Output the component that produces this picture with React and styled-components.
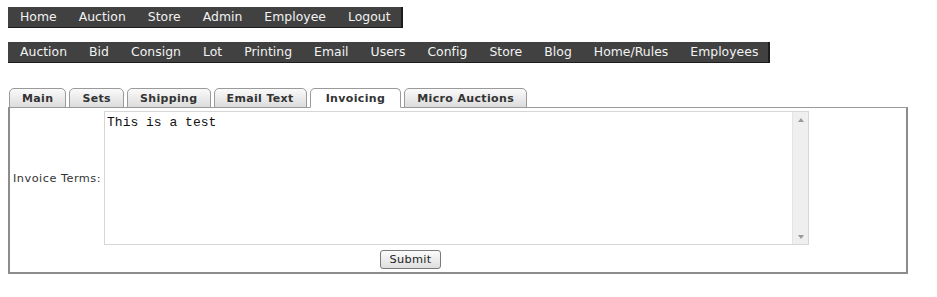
import React from 'react';
import styled, { createGlobalStyle } from 'styled-components';

const GlobalStyle = createGlobalStyle`
	body {
		margin: 0;
		background: #fff;
		font-family: "DejaVu Sans", Verdana, sans-serif;
	}
`;

const Page = styled.div`
	padding: 7px 0 0 8px;
`;

// 상단 메뉴 바
const MenuBar = styled.nav`
	display: flex;
	width: fit-content;
	align-items: center;
	height: 20px;
	background: #414141;
	border-right: 2px solid #1c1c1c;
	border-bottom: 1px solid #1c1c1c;
	margin-bottom: ${(props) => props.$gap || 0}px;
`;

const MenuItem = styled.a`
	padding: 0 11px 0 12px;
	margin-right: -1px;
	color: #f2f2f2;
	font-size: 12.4px;
	letter-spacing: 0.03px;
	line-height: 20px;
	text-decoration: none;
	white-space: nowrap;
	cursor: pointer;
`;

const TabRow = styled.div`
	display: flex;
	align-items: flex-end;
	gap: 3px;
	margin: 25px 0 0 1px;
	position: relative;
	z-index: 1;
`;

const Tab = styled.div`
	height: 18px;
	padding: 0 ${(props) => (props.$active ? 15 : 12)}px;
	border: 1px solid #9a9a9a;
	border-bottom: ${(props) => (props.$active ? '1px solid #fff' : '1px solid #9a9a9a')};
	border-radius: 5px 5px 0 0;
	background: ${(props) =>
		props.$active ? '#fff' : 'linear-gradient(#fafafa, #dcdcdc)'};
	color: #333;
	font-size: 11px;
	font-weight: bold;
	letter-spacing: 0.35px;
	line-height: 19px;
	white-space: nowrap;
	margin-bottom: -1px;
`;

const Panel = styled.div`
	width: 894px;
	border: 1px solid #9a9a9a;
	border-left: 2px solid #8c8c8c;
	border-right: 2px solid #8c8c8c;
	border-bottom: 2px solid #8c8c8c;
	box-shadow: 0 1px 0 #c8c8c8;
	padding: 3px 0 3px 2px;
`;

const FormTable = styled.div`
	display: inline-grid;
	grid-template-columns: auto auto;
	row-gap: 5px;
`;

const Label = styled.div`
	align-self: center;
	padding: 0 3px 0 1px;
	font-size: 11.3px;
	letter-spacing: 0.5px;
	color: #333;
	white-space: nowrap;
`;

const TextBox = styled.div`
	display: flex;
	width: 703px;
	height: 132px;
	border: 1px solid #d6d6d6;
	background: #fff;
`;

const TextArea = styled.div`
	flex: 1;
	padding: 3px 0 0 2px;
	font-family: "Liberation Mono", "Courier New", monospace;
	font-size: 13px;
	color: #111;
`;

const ScrollBar = styled.div`
	width: 15px;
	background: #efefef;
	border-left: 1px solid #e4e4e4;
	display: flex;
	flex-direction: column;
	justify-content: space-between;
	align-items: center;
	padding: 6px 0 5px;
`;

const Arrow = styled.span`
	width: 0;
	height: 0;
	border-left: 3.5px solid transparent;
	border-right: 3.5px solid transparent;
	${(props) =>
		props.$down
			? 'border-top: 4px solid #9a9a9a;'
			: 'border-bottom: 4px solid #9a9a9a;'}
`;

const ButtonCell = styled.div`
	grid-column: 1 / span 2;
	display: flex;
	justify-content: center;
`;

const SubmitButton = styled.button`
	height: 19px;
	padding: 0 9px;
	border: 1px solid #7a7a7a;
	border-radius: 3px;
	background: linear-gradient(#fbfbfb, #dedede);
	color: #222;
	font-family: "DejaVu Sans", Verdana, sans-serif;
	font-size: 11.3px;
	letter-spacing: 0.3px;
	line-height: 16px;
`;

const mainMenu = ['Home', 'Auction', 'Store', 'Admin', 'Employee', 'Logout'];
const adminMenu = ['Auction', 'Bid', 'Consign', 'Lot', 'Printing', 'Email', 'Users', 'Config', 'Store', 'Blog', 'Home/Rules', 'Employees'];
const tabs = ['Main', 'Sets', 'Shipping', 'Email Text', 'Invoicing', 'Micro Auctions'];

const App = () => {
	return (
		<>
			<GlobalStyle />
			<Page>
				<MenuBar $gap={14}>
					{mainMenu.map((m) => (
						<MenuItem key={m}>{m}</MenuItem>
					))}
				</MenuBar>
				<MenuBar>
					{adminMenu.map((m) => (
						<MenuItem key={m}>{m}</MenuItem>
					))}
				</MenuBar>

				<TabRow>
					{tabs.map((t) => (
						<Tab key={t} $active={t === 'Invoicing'}>
							{t}
						</Tab>
					))}
				</TabRow>
				<Panel>
					<FormTable>
						<Label>Invoice Terms:</Label>
						<TextBox>
							<TextArea>This is a test</TextArea>
							<ScrollBar>
								<Arrow />
								<Arrow $down />
							</ScrollBar>
						</TextBox>
						<ButtonCell>
							<SubmitButton>Submit</SubmitButton>
						</ButtonCell>
					</FormTable>
				</Panel>
			</Page>
		</>
	);
};

export default App;
